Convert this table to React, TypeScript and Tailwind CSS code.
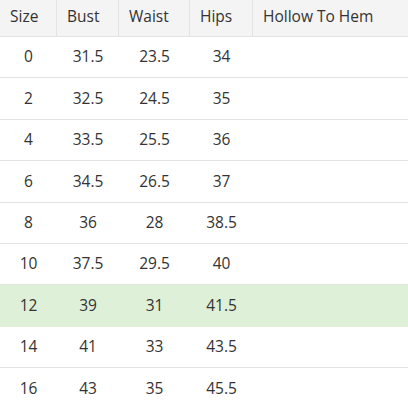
import React from "react";

const rows: [string, string, string, string][] = [
  ["0", "31.5", "23.5", "34"],
  ["2", "32.5", "24.5", "35"],
  ["4", "33.5", "25.5", "36"],
  ["6", "34.5", "26.5", "37"],
  ["8", "36", "28", "38.5"],
  ["10", "37.5", "29.5", "40"],
  ["12", "39", "31", "41.5"],
  ["14", "41", "33", "43.5"],
  ["16", "43", "35", "45.5"],
];

const headers = ["Size", "Bust", "Waist", "Hips", "Hollow To Hem"];

export default function App() {
  return (
    <div
      className="w-[408px] h-[408px] overflow-hidden bg-white text-[15.5px] text-[#333]"
      style={{ fontFamily: '"Open Sans", sans-serif' }}
    >
      <div className="grid grid-cols-[57px_62px_71px_63px_1fr] h-[37px] bg-[#f4f4f4] border-b border-[#e3e3e3]">
        {headers.map((h, i) => (
          <div
            key={h}
            className={
              "flex items-center pl-[10px] pb-[2px] leading-none " +
              (i < 4 ? "border-r border-[#e3e3e3]" : "")
            }
          >
            {h}
          </div>
        ))}
      </div>
      {rows.map((r) => {
        const hl = r[0] === "12";
        return (
          <div
            key={r[0]}
            className={
              "grid grid-cols-[57px_62px_71px_63px_1fr] h-[41.4px] border-b " +
              (hl ? "bg-[#dff0d8] border-[#dff0d8]" : "border-[#e3e3e3]")
            }
          >
            {r.map((c, j) => (
              <div key={j} className="flex items-center justify-center leading-none">
                {c}
              </div>
            ))}
            <div />
          </div>
        );
      })}
    </div>
  );
}
